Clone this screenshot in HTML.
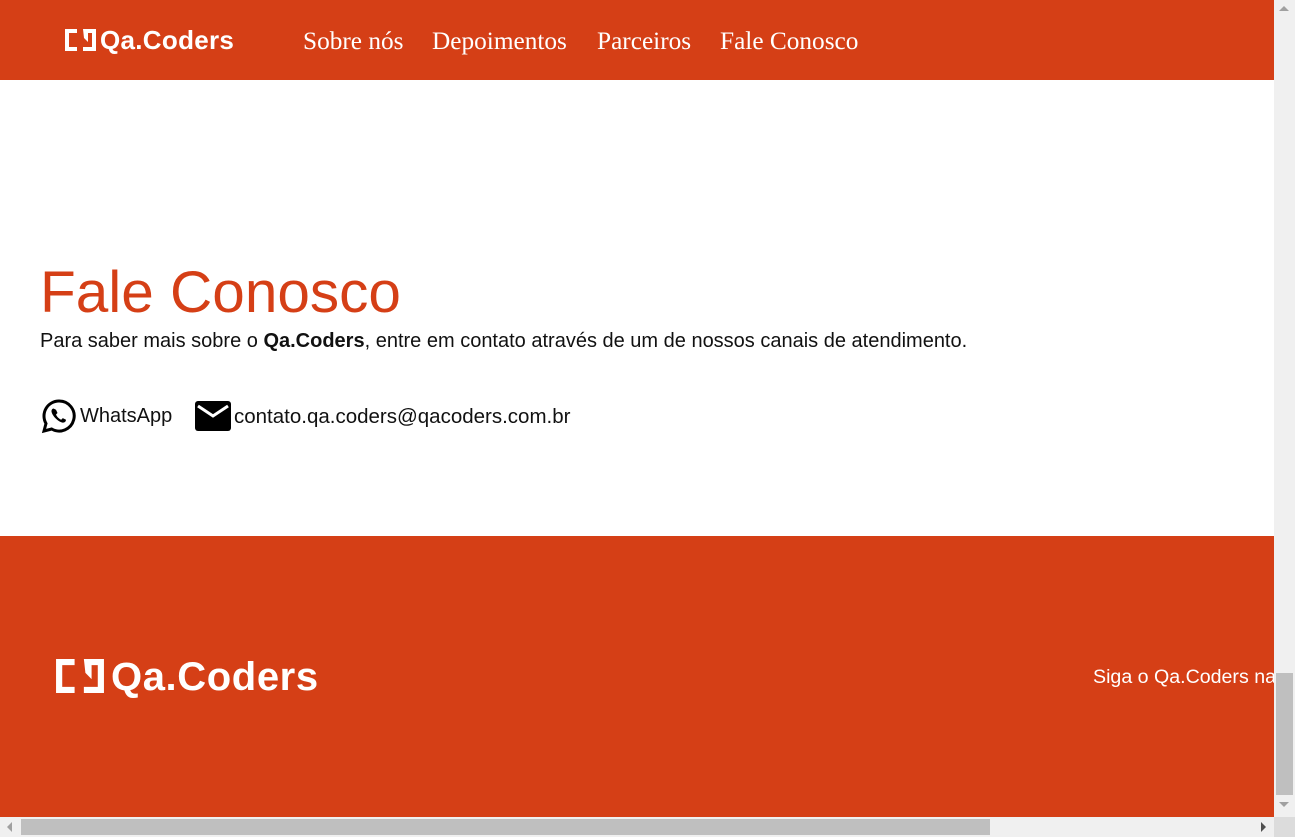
<!DOCTYPE html>
<html><head><meta charset="utf-8"><style>
*{margin:0;padding:0;box-sizing:border-box}
body{width:1295px;height:837px;overflow:hidden;position:relative;background:#fff;font-family:"Liberation Sans",sans-serif}
.hdr{position:absolute;left:0;top:0;width:1274px;height:80px;background:#d53f16}
.nav{position:absolute;top:27px;font-family:"Liberation Serif",serif;font-size:25.3px;color:#fff}
.logo{position:absolute;color:#fff;font-weight:bold;white-space:nowrap}
.logo svg{vertical-align:top}
.ftr{position:absolute;left:0;top:536px;width:1274px;height:281px;background:#d53f16}
</style></head><body>
<div class="hdr">
 <div class="logo" style="left:65px;top:26px;font-size:26px;line-height:28px;letter-spacing:0.3px">
  <svg width="31" height="22" viewBox="0 0 31 22" style="margin-top:3px"><path d="M0 0h12v4H4v14h8v4H0z M18 0h13v22H18v-4h9V4h-4v9l-4-4z" fill="#fff"/></svg><span style="margin-left:4px">Qa.Coders</span>
 </div>
 <div class="nav" style="left:303px">Sobre nós</div>
 <div class="nav" style="left:432px">Depoimentos</div>
 <div class="nav" style="left:597px">Parceiros</div>
 <div class="nav" style="left:720px">Fale Conosco</div>
</div>
<div style="position:absolute;left:40px;top:257px;font-size:58.5px;color:#d53f16;line-height:72px">Fale Conosco</div>
<div style="position:absolute;left:40px;top:330px;font-size:20px;color:#111;line-height:22px">Para saber mais sobre o <b>Qa.Coders</b>, entre em contato através de um de nossos canais de atendimento.</div>
<svg style="position:absolute;left:41px;top:398px" width="36" height="36" viewBox="0 0 36 36"><path d="M18 3a15 15 0 0 0-13 22.5L3 33l7.7-2A15 15 0 1 0 18 3z" fill="none" stroke="#000" stroke-width="3"/><path d="M12.5 10.5c-1 0-2.2 1.4-2 3 .4 3.5 5.5 9.5 10.5 11 1.8.5 3.5-.6 3.8-1.8l.2-1-3.2-1.6-1.6 1.6c-2-.7-4.5-3.2-5.2-5.2l1.5-1.5-1.5-3.3z" fill="#000"/></svg>
<div style="position:absolute;left:80px;top:405px;font-size:20px;color:#111">WhatsApp</div>
<svg style="position:absolute;left:195px;top:401px" width="36" height="30" viewBox="0 0 36 30"><rect x="0" y="0" width="36" height="30" rx="3" fill="#000"/><path d="M3 5l15 10 15-10" fill="none" stroke="#fff" stroke-width="3"/></svg>
<div style="position:absolute;left:234px;top:405px;font-size:20.5px;color:#111">contato.qa.coders@qacoders.com.br</div>
<div class="ftr"></div>
<div class="logo" style="left:55px;top:655px;font-size:40px;line-height:44px;letter-spacing:0.6px">
 <svg width="50" height="34" viewBox="0 0 31 22" style="margin-top:4px"><path d="M0 0h12v4H4v14h8v4H0z M18 0h13v22H18v-4h9V4h-4v9l-4-4z" fill="#fff"/></svg><span style="margin-left:6px">Qa.Coders</span>
</div>
<div style="position:absolute;left:1093px;top:666px;width:181px;overflow:hidden;white-space:nowrap;font-size:19.6px;color:#fff">Siga o Qa.Coders nas redes</div>
<div style="position:absolute;left:1274px;top:0;width:21px;height:817px;background:#f0f0f0"></div>
<div style="position:absolute;left:1276px;top:673px;width:17px;height:122px;background:#bfbfbf"></div>
<div style="position:absolute;left:1279px;top:6px;width:0;height:0;border-left:5px solid transparent;border-right:5px solid transparent;border-bottom:5px solid #a0a0a0"></div>
<div style="position:absolute;left:1279px;top:802px;width:0;height:0;border-left:5px solid transparent;border-right:5px solid transparent;border-top:5px solid #a0a0a0"></div>
<div style="position:absolute;left:0;top:817px;width:1274px;height:20px;background:#f0f0f0"></div>
<div style="position:absolute;left:21px;top:819px;width:969px;height:16px;background:#bfbfbf"></div>
<div style="position:absolute;left:7px;top:822px;width:0;height:0;border-top:5px solid transparent;border-bottom:5px solid transparent;border-right:5px solid #a0a0a0"></div>
<div style="position:absolute;left:1261px;top:822px;width:0;height:0;border-top:5px solid transparent;border-bottom:5px solid transparent;border-left:5px solid #505050"></div>
<div style="position:absolute;left:1274px;top:817px;width:21px;height:20px;background:#dcdcdc"></div>
</body></html>
